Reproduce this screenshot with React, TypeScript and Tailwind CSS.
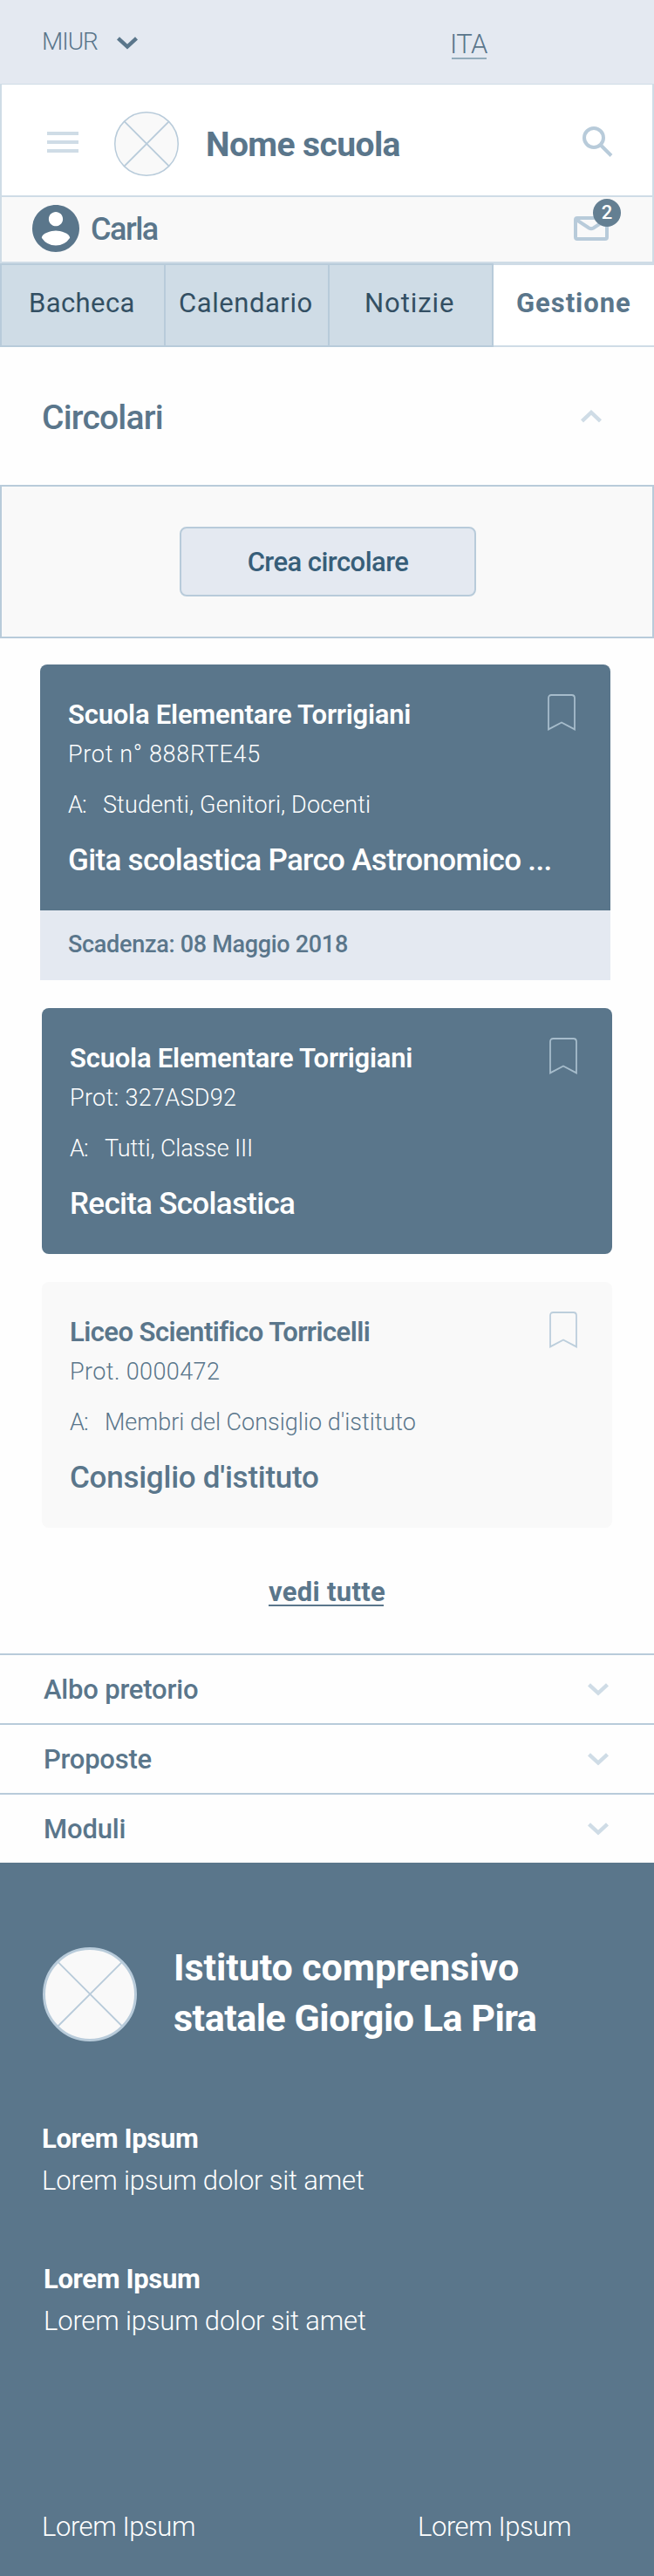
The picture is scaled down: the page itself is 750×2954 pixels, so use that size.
import React from 'react';

function Chevron({ up = false, className = '' }: { up?: boolean; className?: string }) {
  return (
    <svg width="24" height="15" viewBox="0 0 24 15" fill="none" stroke="currentColor" strokeWidth="4.4" className={className}>
      <path d={up ? 'M1.5 12.8L12 3L22.5 12.8' : 'M1.5 1.8L12 11.6L22.5 1.8'} />
    </svg>
  );
}

function Placeholder({ size, stroke, className = '' }: { size: number; stroke: number; className?: string }) {
  return (
    <svg width={size} height={size} viewBox={`0 0 ${size} ${size}`} className={className}>
      <circle cx={size / 2} cy={size / 2} r={(size - stroke) / 2} fill="#f9f9f9" stroke="#b8cbda" strokeWidth={stroke} />
      <path
        d={`M${size * 0.155} ${size * 0.15}L${size * 0.85} ${size * 0.845}M${size * 0.85} ${size * 0.15}L${size * 0.155} ${size * 0.845}`}
        stroke="#b8cbda"
        strokeWidth={1.8}
      />
    </svg>
  );
}

function Bookmark({ className = '' }: { className?: string }) {
  return (
    <svg width="32" height="43" viewBox="0 0 32 43" fill="none" stroke="currentColor" strokeWidth="1.8" className={className}>
      <path d="M1 40.4V4.5Q1 1 4.5 1H27.5Q31 1 31 4.5V40.4L16 32.4Z" />
    </svg>
  );
}

type CardProps = {
  school: React.ReactNode;
  prot: React.ReactNode;
  to: React.ReactNode;
  title: React.ReactNode;
  tone: string;
  mark: string;
};

function Card({ school, prot, to, title, tone, mark }: CardProps) {
  return (
    <article className={`flex h-[282px] w-[654px] items-start pl-8 pr-10 pt-[34px] ${tone}`}>
      <div className="w-0 grow pt-1 whitespace-nowrap leading-10">
        <h3 className="text-[31px] font-semibold">{school}</h3>
        <p className="mt-[5px] text-[27px] font-light">{prot}</p>
        <p className="mt-[18px] flex text-[27px] font-light">
          <span className="w-10 tracking-[-0.8px]">A:</span>
          {to}
        </p>
        <h4 className="mt-6 text-[35px] font-medium">{title}</h4>
      </div>
      <Bookmark className={`shrink-0 ${mark}`} />
    </article>
  );
}

export default function App() {
  return (
    <div className="w-[750px] bg-[#fefefe] font-['Roboto',sans-serif] text-[#5a768b]">
      <div className="flex h-24 bg-[#e4e9f1] leading-10">
        <div className="flex w-[516px] pl-12 pt-7">
          <span className="w-[86px] text-[28px] font-light tracking-[-1px]">MIUR</span>
          <Chevron className="mt-[14px]" />
        </div>
        <div className="pt-[31px]">
          <a className="ml-0.5 block h-[37px] w-10 border-b-2 border-[#93acbb] -indent-[2px] text-[31px] font-light tracking-[-0.6px]">ITA</a>
        </div>
      </div>

      <header className="flex h-[130px] items-start border-2 border-t border-[#cfdce6] bg-white">
        <div className="ml-[52px] mt-[54px] flex w-9 flex-col gap-[6px]">
          <i className="h-1 bg-[#cfdce6]" />
          <i className="h-1 bg-[#cfdce6]" />
          <i className="h-1 bg-[#cfdce6]" />
        </div>
        <Placeholder size={74} stroke={1.5} className="ml-[41px] mt-[31px]" />
        <h1 className="ml-[31px] mt-[49px] w-[432px] text-[39px] font-bold leading-10 tracking-[-0.6px]">Nome scuola</h1>
        <svg width="35" height="36" viewBox="0 0 35 36" fill="none" stroke="#b8cbda" strokeWidth="4" className="mt-[48px]">
          <circle cx="13" cy="13" r="11" />
          <path d="M21.5 22L33 33.5" />
        </svg>
      </header>

      <div className="flex h-[76px] items-start border-x-2 border-b-2 border-[#cfdce6] bg-[#f9f9f9]">
        <svg width="54" height="54" viewBox="2 2 20 20" className="ml-[35px] mt-[9px]">
          <circle cx="12" cy="12" r="9" fill="#fff" />
          <path
            fill="#5a768b"
            d="M12 2C6.48 2 2 6.48 2 12s4.48 10 10 10 10-4.48 10-10S17.52 2 12 2zm0 3c1.66 0 3 1.34 3 3s-1.34 3-3 3-3-1.34-3-3 1.34-3 3-3zm0 14.2a7.2 7.2 0 01-6-3.22c.03-1.99 4-3.08 6-3.08 1.99 0 5.97 1.09 6 3.08a7.2 7.2 0 01-6 3.22z"
          />
        </svg>
        <span className="ml-[13px] mt-[17px] w-[554px] text-[36px] font-medium leading-10 tracking-[-1.5px]">Carla</span>
        <div className="relative mt-[22px]">
          <svg width="40" height="28" viewBox="0 0 40 28" fill="none" stroke="#b8cbda" strokeWidth="4">
            <rect x="2" y="2" width="36" height="24" rx="2" />
            <path d="M3 4L17.5 13.5Q20 15 22.5 13.5L37 4" />
          </svg>
          <span className="absolute -top-5 left-[22px] flex h-8 w-8 items-center justify-center rounded-full bg-[#647f92] text-[22px] font-medium leading-8 text-white">
            2
          </span>
        </div>
      </div>

      <nav className="flex h-24 text-[31px] leading-10 text-[#334f63]">
        <a className="w-[190px] border-2 border-[#b8cbda] bg-[#cfdce6] pl-[31px] pt-6 tracking-[0.4px]">Bacheca</a>
        <a className="w-[188px] border-y-2 border-r-2 border-[#b8cbda] bg-[#cfdce6] pl-[15px] pt-6 tracking-[0.55px]">Calendario</a>
        <a className="w-[188px] border-y-2 border-r-2 border-[#b8cbda] bg-[#cfdce6] pl-10 pt-6 tracking-[0.93px]">Notizie</a>
        <a className="w-[184px] border-y-2 border-[#cfdce6] bg-white pl-[26px] pt-6 font-bold tracking-[0.95px] text-[#5a768b]">Gestione</a>
      </nav>

      <div className="flex h-[158px] items-start justify-between pl-12 pr-[60px] pt-[61px]">
        <h2 className="text-[39px] font-medium leading-10 tracking-[-0.8px]">Circolari</h2>
        <Chevron up className="mt-[11px] text-[#cfdce6]" />
      </div>

      <div className="h-44 border-2 border-[#b8cbda] bg-[#f9f9f9] pl-[204px] pt-[46px]">
        <button className="flex h-20 w-[340px] items-start justify-center rounded-lg border-2 border-[#b8cbda] bg-[#e4e9f1] pt-[19px] text-[31px] font-medium leading-10 tracking-[-0.55px] text-[#375e79]">
          Crea circolare
        </button>
      </div>

      <main className="flex flex-col pt-[30px]">
        <div className="ml-[46px] w-[654px]">
          <Card
            tone="rounded-t-lg bg-[#5a768b] text-white"
            mark="text-[#a6bccb]"
            school={<span className="tracking-[-0.22px]">Scuola Elementare Torrigiani</span>}
            prot={<span className="tracking-[0.68px]">Prot n° 888RTE45</span>}
            to={<span className="tracking-[0.12px]">Studenti, Genitori, Docenti</span>}
            title={<span className="tracking-[-0.68px]">Gita scolastica Parco Astronomico ...</span>}
          />
          <div className="h-20 bg-[#e4e9f1] pl-8 pt-[19px] text-[27px] font-medium leading-10 tracking-[-0.3px]">Scadenza: 08 Maggio 2018</div>
        </div>
        <div className="ml-12 mt-8 flex flex-col gap-8">
          <Card
            tone="rounded-lg bg-[#5a768b] text-white"
            mark="text-[#a6bccb]"
            school={<span className="tracking-[-0.22px]">Scuola Elementare Torrigiani</span>}
            prot={<span className="tracking-[0.31px]">Prot: 327ASD92</span>}
            to={<span className="tracking-[-0.14px]">Tutti, Classe III</span>}
            title={<span className="tracking-[-0.7px]">Recita Scolastica</span>}
          />
          <Card
            tone="rounded-lg bg-[#f9f9f9]"
            mark="text-[#bccedc]"
            school={<span className="tracking-[-0.56px]">Liceo Scientifico Torricelli</span>}
            prot={<span className="tracking-[0.4px]">Prot. 0000472</span>}
            to={<span className="tracking-[0px]">Membri del Consiglio d'istituto</span>}
            title={<span className="tracking-[-0.25px]">Consiglio d'istituto</span>}
          />
        </div>
        <a className="ml-[308px] mt-[53px] h-[37px] w-[132px] whitespace-nowrap border-b-2 border-[#5a768b] pt-px text-[31px] font-bold leading-10 tracking-[0.29px]">
          vedi tutte
        </a>

        <ul className="mt-[54px] text-[31px] font-medium leading-10">
          <li className="flex h-20 items-start justify-between border-t-2 border-[#b8cbda] pl-[50px] pr-[52px] pt-5">
            <span className="tracking-[-0.2px]">Albo pretorio</span>
            <Chevron className="mt-3 text-[#cfdce6]" />
          </li>
          <li className="flex h-20 items-start justify-between border-t-2 border-[#b8cbda] pl-[50px] pr-[52px] pt-5">
            <span className="tracking-[-0.25px]">Proposte</span>
            <Chevron className="mt-3 text-[#cfdce6]" />
          </li>
          <li className="flex h-20 items-start justify-between border-t-2 border-[#b8cbda] pl-[50px] pr-[52px] pt-5">
            <span className="tracking-[-0.15px]">Moduli</span>
            <Chevron className="mt-3 text-[#cfdce6]" />
          </li>
        </ul>
      </main>

      <footer className="h-[818px] bg-[#5a768b] pl-12 pt-[91px] text-[31px] leading-[48px] text-white">
        <div className="flex">
          <Placeholder size={108} stroke={3} className="ml-px mt-[6px]" />
          <h2 className="ml-[42px] whitespace-nowrap text-[43px] font-bold leading-[58px]">
            <span className="block tracking-[-0.1px]">Istituto comprensivo</span>
            <span className="block tracking-[-0.5px]">statale Giorgio La Pira</span>
          </h2>
        </div>
        <p className="mt-[86px] font-bold tracking-[-0.35px]">Lorem Ipsum</p>
        <p className="font-light tracking-[-0.17px]">Lorem ipsum dolor sit amet</p>
        <p className="ml-0.5 mt-[65px] font-bold tracking-[-0.35px]">Lorem Ipsum</p>
        <p className="ml-0.5 font-light tracking-[-0.17px]">Lorem ipsum dolor sit amet</p>
        <div className="mt-[188px] flex font-light tracking-[-0.42px]">
          <a className="w-[431px]">Lorem Ipsum</a>
          <a>Lorem Ipsum</a>
        </div>
      </footer>
    </div>
  );
}
